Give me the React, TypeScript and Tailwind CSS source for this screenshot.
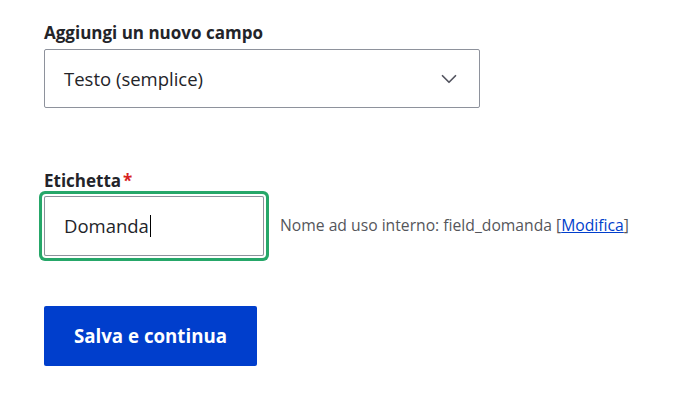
import { ChevronDown } from 'lucide-react';

export default function App() {
  return (
    <div className="min-h-[399px] w-[677px] bg-white pl-[44px] pt-[21px] font-['Open_Sans',sans-serif] text-[#232429]">
      <div>
        <label className="block text-[17px] font-bold leading-[24px]">Aggiungi un nuovo campo</label>
        <div className="mt-[4px] flex h-[59px] w-[436px] items-center justify-between rounded-[2px] border border-[#8e929c] pl-[19px] pr-[17px]">
          <span className="text-[18.5px]">Testo (semplice)</span>
          <ChevronDown className="h-[26px] w-[26px] text-[#545560]" strokeWidth={1.6} />
        </div>
      </div>

      <div className="mt-[61px]">
        <label className="block text-[17px] font-bold leading-[24px]">
          Etichetta<span className="ml-[2px] text-[#d72222]">*</span>
        </label>
        <div className="mt-[3px] flex items-center gap-[16px]">
          <div className="flex h-[60px] w-[220px] items-center rounded-[2px] border border-[#8e929c] pl-[19px] text-[18.5px] shadow-[0_0_0_2px_#fff,0_0_0_5px_#26a769]">
            Domanda<span className="ml-[1px] inline-block h-[22px] w-[1px] bg-black" />
          </div>
          <p className="text-[15.7px] text-[#55565b]">
            Nome ad uso interno: field_domanda [<a href="#" className="text-[#003ecc] underline">Modifica</a>]
          </p>
        </div>
      </div>

      <button className="mt-[50px] h-[60px] w-[213px] rounded-[2px] bg-[#003ecc] text-[18.7px] font-bold text-white">
        Salva e continua
      </button>
    </div>
  );
}
